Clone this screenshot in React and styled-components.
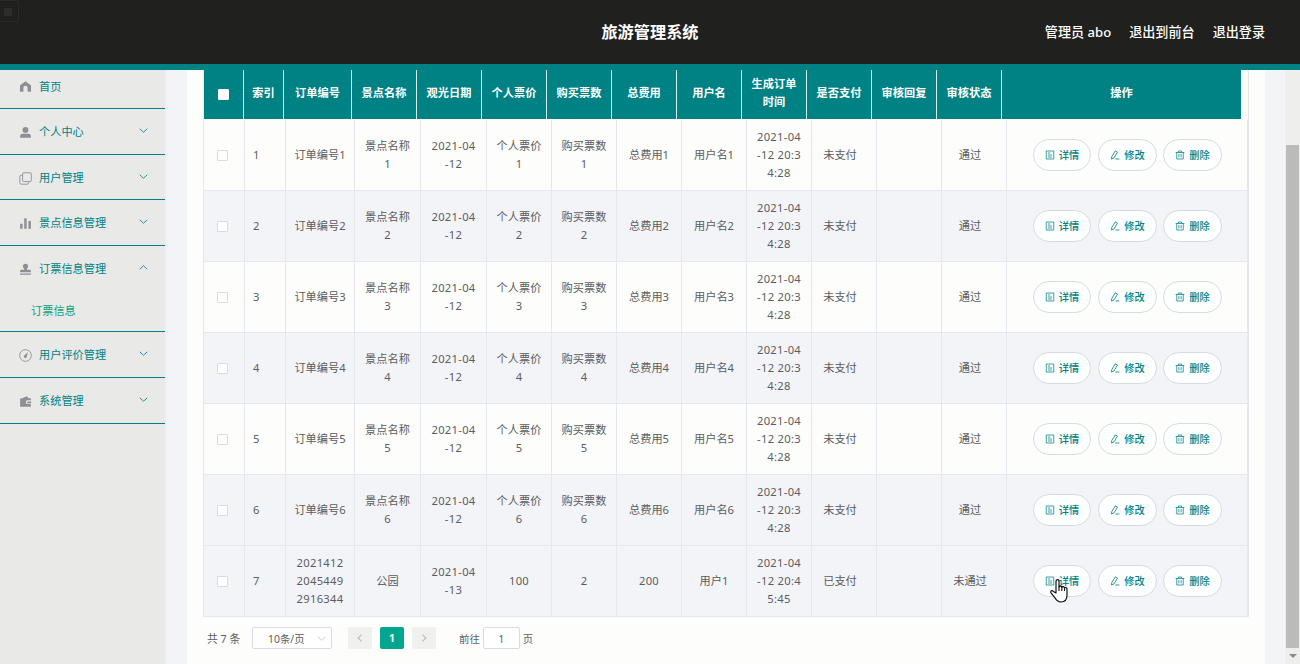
import styled, { createGlobalStyle, css } from "styled-components";

const GlobalStyle = createGlobalStyle`
  * {
    box-sizing: border-box;
  }
  body {
    margin: 0;
    overflow: hidden;
    font-family: "Noto Sans", "Noto Sans CJK SC", sans-serif;
    background-color: #f3f4f7;
  }
`;

const Page = styled.div`
  position: relative;
  height: 664px;
  display: flex;
  flex-direction: column;
  overflow: hidden;
`;

const Header = styled.header`
  height: 70px;
  flex: none;
  display: grid;
  grid-template-columns: 1fr auto 1fr;
  align-items: center;
  background-color: #20201e;
  border-bottom: 6px solid #008284;
  color: #fff;
`;

const Title = styled.h1`
  grid-column: 2;
  margin: 0;
  font-size: 16.2px;
  font-weight: 700;
  line-height: 24px;
`;

const HeaderLinks = styled.div`
  display: flex;
  justify-content: flex-end;
  gap: 18px;
  padding-right: 35px;
  font-size: 13.1px;
  font-weight: 500;
  line-height: 20px;
  white-space: nowrap;
`;

// small outlined square in the top left corner
const Recorder = styled.div`
  position: absolute;
  left: 0;
  top: 0;
  width: 19px;
  height: 22px;
  display: flex;
  align-items: center;
  padding: 2px 0 0 4px;
  border: 1px solid #2a2a28;
  border-left: 0;
  border-radius: 0 2px 2px 0;
  &::before {
    content: "";
    width: 8px;
    height: 8px;
    background-color: #2e2e2c;
  }
`;

const Body = styled.div`
  flex: 1;
  min-height: 0;
  display: flex;
  overflow: hidden;
`;

const Sidebar = styled.nav`
  width: 165px;
  flex: none;
  background-color: #e9e9e8;
  box-shadow: 0 0 4px #e9e9ec;
`;

const MenuGroup = styled.div`
  height: ${(props) => props.$height}px;
  border-bottom: 1px solid #008284;
`;

const MenuItem = styled.div`
  height: ${(props) => props.$height}px;
  display: flex;
  align-items: center;
  padding: 0 16px 0 19px;
  font-size: 11.2px;
  color: #008284;
  svg {
    flex: none;
  }
  span {
    flex: 1;
    margin-left: 7px;
    padding-bottom: 2px;
    white-space: nowrap;
  }
  svg + span + svg {
    position: relative;
    top: -2px;
  }
`;

const SubItem = styled.div`
  height: 38px;
  padding-left: 31px;
  font-size: 11.2px;
  line-height: 38px;
  color: #0aa37c;
`;

const Main = styled.main`
  flex: 1;
  margin: 0 20px 0 22px;
  padding-left: 16px;
  background-color: #fdfefc;
`;

const Table = styled.div`
  width: 1046px;
  border-left: 1px solid #e6e8ee;
  border-right: 1px solid #e6e8ee;
  font-size: 11.2px;
  line-height: 18px;
  text-align: center;
`;

const HeadRow = styled.div`
  width: 1037px;
  height: 49px;
  margin-bottom: 1px;
  display: grid;
  grid-template-columns: 40px 40px 68px repeat(10, 65px) 239px;
  background-color: #008284;
  color: #fff;
  font-weight: 700;
`;

const HeadCell = styled.div`
  display: flex;
  align-items: center;
  justify-content: center;
  padding-bottom: 3px;
  border-right: 1px solid #d5f0ef;
  white-space: nowrap;
  &:last-child {
    border-right: 0;
  }
`;

const Row = styled.div`
  height: 71px;
  display: grid;
  grid-template-columns: 41px 41px 69px 66px 66px repeat(8, 65px) 241px;
  background-color: ${(props) => (props.$shaded ? "#f3f4f8" : "#fdfefc")};
  color: #5a5c60;
  border-bottom: 1px solid #e6e8ee;
`;

const Cell = styled.div`
  display: flex;
  flex-direction: column;
  justify-content: center;
  align-items: center;
  padding-bottom: 1px;
  border-right: 1px solid #e6e8ee;
  white-space: nowrap;
  ${(props) =>
    props.$numeric &&
    css`
      letter-spacing: 0.3px;
    `}
  ${(props) =>
    props.$index &&
    css`
      align-items: flex-start;
      padding-left: 8px;
    `}
  ${(props) =>
    props.$status &&
    css`
      padding-right: 8px;
    `}
`;

const Checkbox = styled.i`
  width: 11px;
  height: 11px;
  margin-right: 3px;
  margin-top: 1px;
  border: 1px solid #d9dbe1;
  border-radius: 1px;
  background-color: #fff;
  ${(props) =>
    props.$head &&
    css`
      margin: 2px 0 0;
      border-color: #fff;
    `}
`;

const Actions = styled.div`
  display: flex;
  align-items: center;
  gap: 7px;
  padding: 0 0 1px 26px;
  border-right: 1px solid #e6e8ee;
`;

const ActionButton = styled.button`
  width: 58px;
  height: 32px;
  flex: none;
  display: flex;
  align-items: center;
  justify-content: center;
  gap: 4px;
  padding: 0;
  border: 1px solid #d8dbe2;
  border-radius: 16px;
  background-color: #fdfefe;
  color: #008284;
  font: 500 10.2px "Noto Sans", "Noto Sans CJK SC", sans-serif;
  & + & {
    width: 59px;
  }
  & + & + & {
    margin-left: -1px;
  }
`;

const Pagination = styled.div`
  display: flex;
  align-items: center;
  height: 22px;
  margin: 10px 0 0 4px;
  font-size: 10.4px;
  color: #5c5e62;
  white-space: nowrap;
`;

const Total = styled.span`
  width: 45px;
  font-size: 10.8px;
`;

const PageSize = styled.div`
  width: 80px;
  height: 22px;
  display: flex;
  align-items: center;
  justify-content: space-between;
  padding: 0 4px 0 15px;
  margin-right: 16px;
  border: 1px solid #d8dbe2;
  border-radius: 2px;
  background-color: #fff;
`;

const PageButton = styled.button`
  width: 24px;
  height: 22px;
  display: flex;
  align-items: center;
  justify-content: center;
  margin-right: 8px;
  padding: 0;
  border: 0;
  border-radius: 2px;
  background-color: ${(props) => (props.$active ? "#00a78e" : "#f0f0ef")};
  color: ${(props) => (props.$active ? "#fff" : "#b9bcc4")};
  font: 700 10.4px "Noto Sans", sans-serif;
`;

const Jump = styled.label`
  display: flex;
  align-items: center;
  gap: 3px;
  margin-left: 15px;
`;

const JumpInput = styled.input`
  width: 37px;
  height: 22px;
  padding: 0;
  border: 1px solid #d8dbe2;
  border-radius: 2px;
  background-color: #fff;
  color: #5c5e62;
  text-align: center;
  font: 10.8px "Noto Sans", sans-serif;
`;

const Scrollbar = styled.div`
  width: 15px;
  flex: none;
  display: flex;
  flex-direction: column;
  align-items: center;
  padding-top: 75px;
  background-color: #eeeeec;
`;

const Thumb = styled.div`
  width: 13px;
  height: 503px;
  background-color: #bbbbba;
`;

const ScrollArrow = styled.i`
  margin-top: 6px;
  border: 4px solid transparent;
  border-top-color: #8c8c8b;
  border-bottom: 0;
`;

const Pointer = styled.svg`
  position: absolute;
  left: 1050px;
  top: 578px;
`;

const shapes = {
  home: (
    <path fill="currentColor" d="M8 1.400 1.200 6.800V14.600h4.200V9.800a2.600 2.600 0 0 1 5.200 0v4.800h4.200V6.800z" />
  ),
  user: (
    <path fill="currentColor" d="M8 1.200a3.600 3.600 0 1 0 0 7.200 3.600 3.600 0 0 0 0-7.200zM1.400 14.400v-2c0-1.800 1.400-2.800 3.200-2.800h6.800c1.800 0 3.200 1 3.200 2.800v2z" />
  ),
  copy: (
    <g fill="none" stroke="currentColor" strokeWidth="1.1">
      <rect x="4.400" y="1" width="10.800" height="10.800" rx="1.600" />
      <path d="M4.400 4H2.800C1.700 4 1 4.700 1 5.800v7.400c0 1.100.7 1.800 1.800 1.800h7.400c1.100 0 1.800-.7 1.800-1.800v-1.400" />
    </g>
  ),
  chart: (
    <path fill="currentColor" d="M1.400 8.400h3v6.200h-3zM6.400 1.400h3v13.200h-3zM11.600 5h3v9.600h-3z" />
  ),
  stamp: (
    <path fill="currentColor" d="M8 .8a3.200 3.200 0 0 0-3.200 3.200c0 1.700 1.600 2.600 1.600 4.400H3.200c-1.200 0-1.900.8-1.900 2v1h13.400v-1c0-1.200-.7-2-1.900-2H9.600c0-1.800 1.600-2.700 1.600-4.400A3.200 3.200 0 0 0 8 .8zM1.300 13h13.400v1.500H1.300z" />
  ),
  compass: (
    <g>
      <circle cx="8" cy="8" r="7.200" fill="none" stroke="currentColor" strokeWidth="1.1" />
      <path fill="currentColor" d="M11.200 3.800 9.600 9a1.900 1.900 0 1 1-2.400-1.600z" />
    </g>
  ),
  wallet: (
    <path fill="currentColor" d="M9.800 1.400 11.600 4H14.600v2.600h-4a2.200 2.200 0 0 0 0 4.600h4V14.400H1.400V4.400h2zM11 8h4v2.200h-4a1.100 1.100 0 0 1 0-2.200z" />
  ),
  down: <path fill="none" stroke="currentColor" strokeWidth="1.2" d="m2.500 5.500 5.500 5 5.500-5" />,
  up: <path fill="none" stroke="currentColor" strokeWidth="1.2" d="m2.500 10.500 5.500-5 5.500 5" />,
  left: <path fill="none" stroke="currentColor" strokeWidth="1.8" d="M10.500 2.500 5 8l5.500 5.500" />,
  right: <path fill="none" stroke="currentColor" strokeWidth="1.8" d="M5.500 2.500 11 8l-5.500 5.500" />,
  detail: (
    <path fill="none" stroke="currentColor" strokeWidth="1.2" d="M2 1.600h12v12.800H2zM4.800 4.800h3.600M4.800 8h6.400M4.800 11.200h6.400" />
  ),
  edit: (
    <path fill="none" stroke="currentColor" strokeWidth="1.300" d="M8.400 1.400 12 3.400 6.400 12.600 2.400 14.400 2.800 10.600zM8.600 14.400h6.400" />
  ),
  trash: (
    <path fill="none" stroke="currentColor" strokeWidth="1.200" d="M1 4h14M5.400 3.800V1.600h5.200v2.200M2.800 4v10.400h10.400V4M6.200 6.600v5.200M9.800 6.600v5.200" />
  ),
};

function Icon({ name, size = 13, color = "currentColor" }) {
  return (
    <svg width={size} height={size} viewBox="0 0 16 16" color={color}>
      {shapes[name]}
    </svg>
  );
}

const menu = [
  { icon: "home", label: "首页", height: 39, item: 33 },
  { icon: "user", label: "个人中心", height: 46, item: 46, arrow: "down" },
  { icon: "copy", label: "用户管理", height: 45, item: 46, arrow: "down" },
  { icon: "chart", label: "景点信息管理", height: 46, item: 46, arrow: "down" },
  { icon: "stamp", label: "订票信息管理", height: 86, item: 46, arrow: "up", child: "订票信息" },
  { icon: "compass", label: "用户评价管理", height: 46, item: 46, arrow: "down" },
  { icon: "wallet", label: "系统管理", height: 46, item: 46, arrow: "down" },
];

const heads = [
  ["索引"],
  ["订单编号"],
  ["景点名称"],
  ["观光日期"],
  ["个人票价"],
  ["购买票数"],
  ["总费用"],
  ["用户名"],
  ["生成订单", "时间"],
  ["是否支付"],
  ["审核回复"],
  ["审核状态"],
  ["操作"],
];

const orders = [1, 2, 3, 4, 5, 6].map((n) => [
  [`${n}`],
  [`订单编号${n}`],
  ["景点名称", `${n}`],
  ["2021-04", "-12"],
  ["个人票价", `${n}`],
  ["购买票数", `${n}`],
  [`总费用${n}`],
  [`用户名${n}`],
  ["2021-04", "-12 20:3", "4:28"],
  ["未支付"],
  [],
  ["通过"],
]);

orders.push([
  ["7"],
  ["2021412", "2045449", "2916344"],
  ["公园"],
  ["2021-04", "-13"],
  ["100"],
  ["2"],
  ["200"],
  ["用户1"],
  ["2021-04", "-12 20:4", "5:45"],
  ["已支付"],
  [],
  ["未通过"],
]);

export default function App() {
  return (
    <Page>
      <GlobalStyle />
      <Header>
        <Title>旅游管理系统</Title>
        <HeaderLinks>
          <span>管理员 abo</span>
          <span>退出到前台</span>
          <span>退出登录</span>
        </HeaderLinks>
      </Header>
      <Recorder />
      <Body>
        <Sidebar>
          {menu.map((m) => (
            <MenuGroup key={m.label} $height={m.height}>
              <MenuItem $height={m.item}>
                <Icon name={m.icon} color="#8d8f93" />
                <span>{m.label}</span>
                {m.arrow && <Icon name={m.arrow} size={11} />}
              </MenuItem>
              {m.child && <SubItem>{m.child}</SubItem>}
            </MenuGroup>
          ))}
        </Sidebar>
        <Main>
          <Table>
            <HeadRow>
              <HeadCell>
                <Checkbox $head />
              </HeadCell>
              {heads.map((lines) => (
                <HeadCell key={lines[0]}>
                  <div>
                    {lines.map((line) => (
                      <div key={line}>{line}</div>
                    ))}
                  </div>
                </HeadCell>
              ))}
            </HeadRow>
            {orders.map((order, i) => (
              <Row key={i} $shaded={i % 2 === 1 || i === 6}>
                <Cell>
                  <Checkbox />
                </Cell>
                {order.map((lines, j) => (
                  <Cell
                    key={j}
                    $index={j === 0}
                    $status={j === 9 || j === 11}
                    $numeric={/^\d/.test(lines[0])}
                  >
                    {lines.map((line, k) => (
                      <span key={k}>{line}</span>
                    ))}
                  </Cell>
                ))}
                <Actions>
                  <ActionButton>
                    <Icon name="detail" size={10} />
                    详情
                  </ActionButton>
                  <ActionButton>
                    <Icon name="edit" size={10} />
                    修改
                  </ActionButton>
                  <ActionButton>
                    <Icon name="trash" size={10} />
                    删除
                  </ActionButton>
                </Actions>
              </Row>
            ))}
          </Table>
          <Pagination>
            <Total>共 7 条</Total>
            <PageSize>
              10条/页
              <Icon name="down" size={11} color="#c0c4cc" />
            </PageSize>
            <PageButton>
              <Icon name="left" size={10} />
            </PageButton>
            <PageButton $active>1</PageButton>
            <PageButton>
              <Icon name="right" size={10} />
            </PageButton>
            <Jump>
              前往
              <JumpInput defaultValue="1" />
              页
            </Jump>
          </Pagination>
        </Main>
        <Scrollbar>
          <Thumb />
          <ScrollArrow />
        </Scrollbar>
      </Body>
      <Pointer width="20" height="26" viewBox="0 0 20 26">
        <path
          fill="#fff"
          stroke="#111"
          strokeWidth="1.2"
          strokeLinejoin="round"
          d="M6 15V3.200c0-2 3-2 3 0V9c.3-1.400 2.800-1.200 2.800.4.500-1.200 2.700-.9 2.700.7.600-1 2.500-.7 2.500.9v6c0 4.500-2 7-6 7-3.500 0-4.800-1.600-6.200-4.400L1 14.800c-1-2 1.200-2.800 2.400-1.400z"
        />
        <path fill="none" stroke="#111" strokeWidth="1.1" d="M9 8.500V13M11.800 9.500V13M14.500 10.200V13" />
      </Pointer>
    </Page>
  );
}
